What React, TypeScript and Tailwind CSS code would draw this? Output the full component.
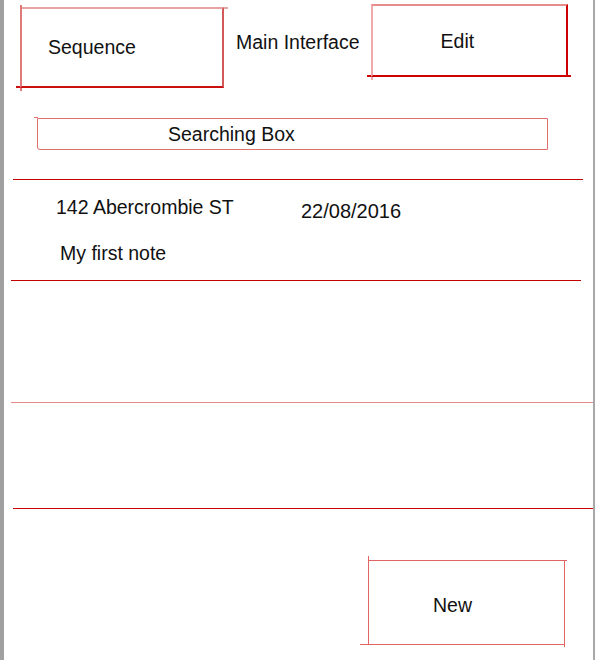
const font = { fontFamily: '"Liberation Sans", Arial, sans-serif' };

const Tick = ({ className }: { className: string }) => <span className={`absolute ${className}`} />;

export default function App() {
  return (
    <div className="flex w-[596px] h-[660px] bg-white text-[#111]" style={font}>
      {/* left gray edge */}
      <div className="w-[4px] h-full bg-[#a0a0a0]" />

      <div className="flex flex-col w-[589px] h-full">
        {/* header */}
        <div className="flex items-start h-[118px]">
          <div className="relative ml-[16px] mt-[7px] w-[204px] h-[81px] flex items-center pl-[26px] border-t-2 border-t-[#e8a4a4] border-l-2 border-l-[#e07a7a] border-r-2 border-r-[#d45a5a] border-b-2 border-b-[#cc1010]">
            <span className="text-[19.5px] leading-6 -mt-[2px]">Sequence</span>
            <Tick className="-left-[2px] -top-[4px] w-[2px] h-[4px] bg-[#e07a7a]" />
            <Tick className="-left-[2px] -bottom-[5px] w-[2px] h-[3px] bg-[#e07a7a]" />
            <Tick className="-left-[6px] -bottom-[2px] w-[4px] h-[2px] bg-[#cc1010]" />
            <Tick className="-right-[6px] -top-[2px] w-[4px] h-[2px] bg-[#e8a4a4]" />
          </div>

          <span className="ml-[12px] mt-[30px] text-[19.5px] leading-6">Main Interface</span>

          <div className="relative ml-[11px] mt-[4px] w-[197px] h-[73px] flex items-center pl-[68px] border-t-2 border-t-[#e68c8c] border-l-2 border-l-[#eeaaaa] border-r-2 border-r-[#cc0000] border-b-2 border-b-[#cc0000]">
            <span className="text-[19.5px] leading-6">Edit</span>
            <Tick className="-left-[2px] -bottom-[5px] w-[2px] h-[3px] bg-[#eeaaaa]" />
            <Tick className="-left-[6px] -bottom-[2px] w-[4px] h-[2px] bg-[#cc0000]" />
            <Tick className="-right-[5px] -bottom-[2px] w-[3px] h-[2px] bg-[#cc0000]" />
          </div>
        </div>

        {/* search */}
        <div className="relative ml-[33px] w-[511px] h-[32px] flex items-center pl-[130px] border border-[#e07070] rounded-bl-[3px]">
          <span className="text-[19.5px] leading-6">Searching Box</span>
          <Tick className="-left-[4px] -top-[2px] w-[4px] h-px bg-[#e07070]" />
        </div>

        <div className="mt-[29px] ml-[9px] w-[570px] h-px bg-[#c40000]" />

        {/* note */}
        <div className="h-[100px] pt-[15px]">
          <div className="flex items-start">
            <span className="ml-[52px] w-[245px] text-[19.5px] leading-6">142 Abercrombie ST</span>
            <span className="mt-[4px] text-[20px] leading-6">22/08/2016</span>
          </div>
          <div className="mt-[18px] ml-[56px] text-[19.5px] leading-6">My first note</div>
        </div>

        <div className="ml-[7px] w-[570px] h-px bg-[#c40000]" />
        <div className="mt-[121px] ml-[7px] w-[582px] h-px bg-[#e38a8a]" />
        <div className="mt-[105px] ml-[9px] w-[580px] h-px bg-[#cc0000]" />

        {/* new */}
        <div className="relative mt-[51px] ml-[364px] w-[197px] h-[85px] flex items-center pl-[64px] border border-[#e06464]">
          <span className="text-[19.5px] leading-6 mt-[4px]">New</span>
          <Tick className="-left-px -top-[5px] w-px h-[4px] bg-[#e06464]" />
          <Tick className="-left-[9px] -bottom-px w-[8px] h-px bg-[#e06464]" />
          <Tick className="-right-[3px] -top-px w-[2px] h-px bg-[#e06464]" />
          <Tick className="-right-px -bottom-[3px] w-px h-[2px] bg-[#e06464]" />
        </div>
      </div>

      {/* right gray edge */}
      <div className="w-[2px] h-full bg-[#a8a8a8]" />
      <div className="w-px h-full bg-white" />
    </div>
  );
}
